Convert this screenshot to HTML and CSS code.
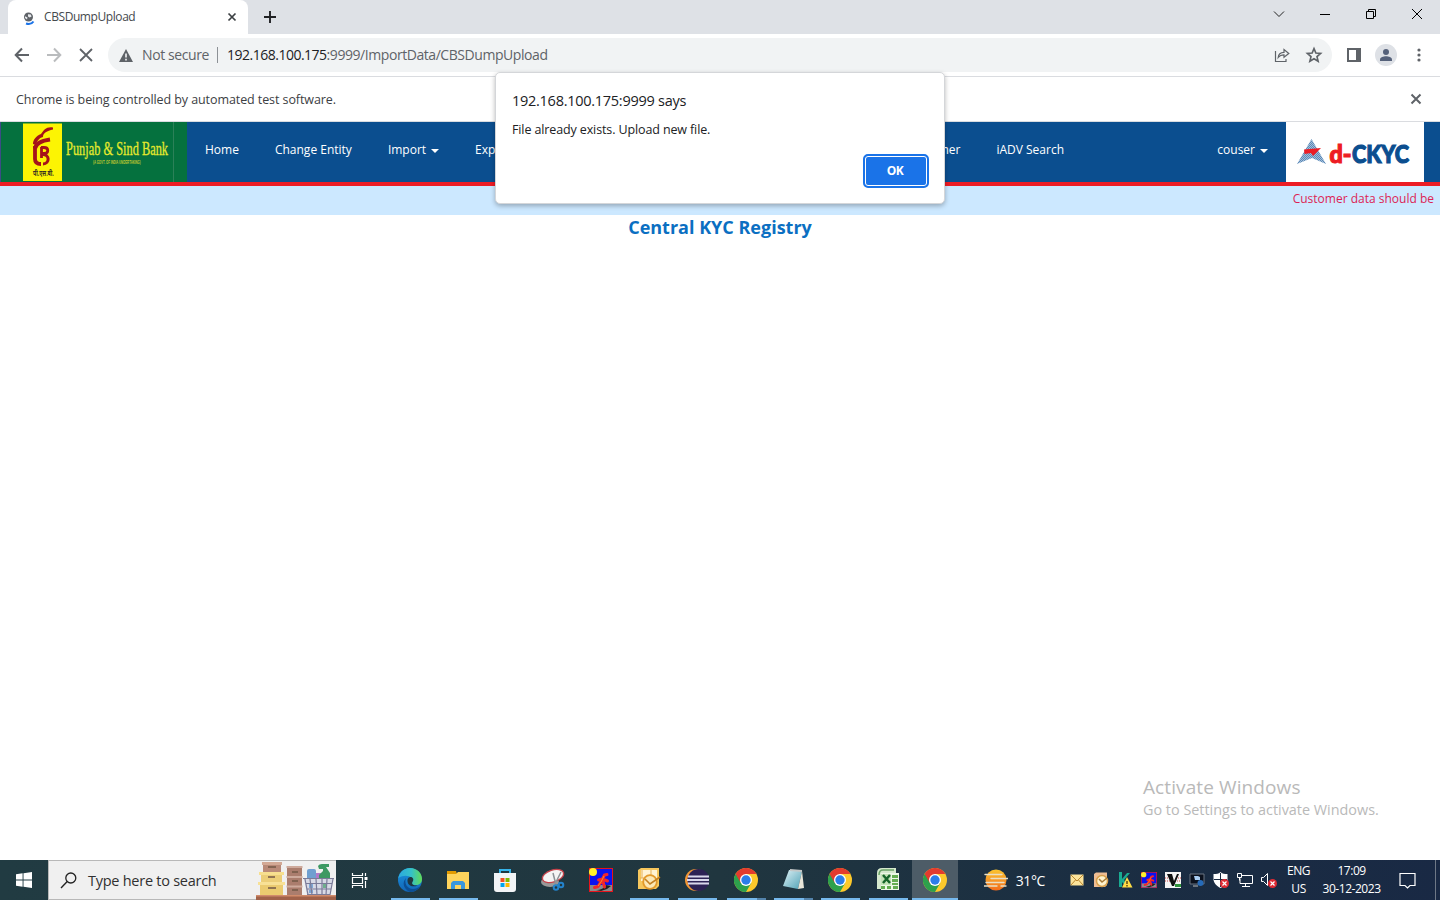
FILE: index.html
```html
<!DOCTYPE html>
<html lang="en">
<head>
<meta charset="utf-8">
<title>CBSDumpUpload</title>
<link rel="stylesheet" href="styles.css">
</head>
<body>
<svg class="defs" width="0" height="0" aria-hidden="true">
  <defs>
    <linearGradient id="edgeA" x1="0" y1="0" x2="1" y2="0"><stop offset="0" stop-color="#2ba9df"/><stop offset=".55" stop-color="#35c1c8"/><stop offset="1" stop-color="#62dc56"/></linearGradient>
    <linearGradient id="edgeB" x1="0" y1="0" x2="0" y2="1"><stop offset="0" stop-color="#1b95df"/><stop offset="1" stop-color="#1266b8"/></linearGradient>
    <linearGradient id="sun" x1="0" y1="0" x2="0" y2="1"><stop offset="0" stop-color="#fbc530"/><stop offset="1" stop-color="#f26c1c"/></linearGradient>
    <linearGradient id="note" x1="0" y1="0" x2="1" y2="1"><stop offset="0" stop-color="#dff2f6"/><stop offset="1" stop-color="#4fa1b5"/></linearGradient>
    <symbol id="chrome" viewBox="0 0 24 24">
      <circle cx="12" cy="12" r="12" fill="#fdc92b"/>
      <path d="M12 12 1.600 6A12 12 0 0 0 12 24L17.200 15z" fill="#2da14c"/>
      <path d="M1.600 6A12 12 0 0 1 22.400 6H12L6.800 15z" fill="#e33b2e"/>
      <circle cx="12" cy="12" r="6" fill="#fff"/><circle cx="12" cy="12" r="4.700" fill="#2b7de9"/>
    </symbol>
    <symbol id="runner" viewBox="0 0 24 24">
      <path d="M0 0h24v24H0z" fill="#e8141c"/><path d="M1 1h22v22H1z" fill="#0a12f0"/><path d="M1 17h22v6H1z" fill="#8b8b8b"/>
      <circle cx="4" cy="4" r="4" fill="#fff12a"/><path d="M7 22c5 0 8-2 10-5l5 1-4 3-6 2z" fill="#222"/>
      <path d="M18 6.500 15.500 7 12.500 13 9 18.500 5.500 19.500M9.500 12l4-1 5 2M13.500 12l2 7" fill="none" stroke="#f3272a" stroke-width="3" stroke-linejoin="round" stroke-linecap="round"/>
      <path d="M15 8l-3 6-3 4" stroke="#ff8a20" fill="none"/>
    </symbol>
    <pattern id="dots" width="2" height="2" patternUnits="userSpaceOnUse"><path d="M0 0h2v2H0z" fill="#a5bfd9"/><path d="M0 0h1v1H0zM1 1h1v1H1z" fill="#5a89b8"/></pattern>
  </defs>
</svg>

<div class="screen">
  <header class="tabstrip">
    <div class="tab">
      <svg class="favicon" viewBox="0 0 14 14"><circle cx="5.500" cy="5" r="4.500" fill="#5f6368"/><path d="M2 4.200 4.500 5.500 4 7.500 2 6zM5 2.200l2.800.3.8 2-2 1-1.600-1z" fill="#e8eaed"/><path d="M3 11.500c3.500 1.200 6 .2 7.500-2" fill="none" stroke="#1a73e8" stroke-width="2"/></svg>
      <span class="tab-title">CBSDumpUpload</span>
      <svg class="tab-close" viewBox="0 0 10 10"><path d="M1.500 1.500l7 7m0-7-7 7" stroke="#3c4043" stroke-width="1.700"/></svg>
    </div>
    <svg class="new-tab" viewBox="0 0 12 12"><path d="M6 0v12M0 6h12" stroke="#202124" stroke-width="1.900"/></svg>
    <div class="win-controls">
      <svg viewBox="0 0 12 12"><path d="M1 3.500l5 5 5-5" fill="none" stroke="#222"/></svg>
      <svg viewBox="0 0 12 12"><path d="M1 6.500h10" stroke="#000"/></svg>
      <svg viewBox="0 0 12 12"><path d="M1.500 3.500h7v7h-7zM3.500 3.500v-2h7v7h-2" fill="none" stroke="#000"/></svg>
      <svg viewBox="0 0 12 12"><path d="M1 1l10 10M11 1 1 11" stroke="#000"/></svg>
    </div>
  </header>

  <div class="toolbar">
    <div class="nav-buttons">
      <svg viewBox="0 0 16 16"><path d="M15 8H2M8 1.500 1.700 8 8 14.500" fill="none" stroke="#5f6368" stroke-width="2"/></svg>
      <svg viewBox="0 0 16 16"><path d="M1 8h13M8 1.500 14.300 8 8 14.500" fill="none" stroke="#babcbe" stroke-width="2"/></svg>
      <svg viewBox="0 0 16 16"><path d="M2 2l12 12M14 2 2 14" stroke="#5f6368" stroke-width="1.800"/></svg>
    </div>
    <div class="omnibox">
      <svg class="warn" viewBox="0 0 14 13"><path d="M7 0 14 13H0z" fill="#5f6368"/><path d="M7 4.500v4M7 9.800v1.600" stroke="#fff" stroke-width="1.500"/></svg>
      <span class="not-secure">Not secure</span>
      <span class="divider"></span>
      <span class="url"><b>192.168.100.175</b>:9999/ImportData/CBSDumpUpload</span>
      <svg class="share" viewBox="0 0 16 14"><path d="M1.500 3v10.500H12V11" fill="none" stroke="#5f6368" stroke-width="1.200"/><path d="M4.200 9.500C4.500 6 7 4.500 10 4.400V1.600L14.800 5.500 10 9.300V6.800C7.500 6.800 5.700 7.600 4.200 9.500z" fill="none" stroke="#5f6368" stroke-width="1.200"/></svg>
      <svg class="star" viewBox="0 0 24 24"><path d="M12 3.500l2.500 5.900 6.300.5-4.800 4.200 1.500 6.200L12 17l-5.500 3.300L8 14.100 3.200 9.900l6.300-.5z" fill="none" stroke="#5f6368" stroke-width="2.200"/></svg>
    </div>
    <svg class="panel-icon" viewBox="0 0 14 14"><path d="M0 0h14v14H0z" fill="#5f6368"/><path d="M2 2h7v10H2z" fill="#fff"/></svg>
    <svg class="avatar" viewBox="0 0 22 22"><circle cx="11" cy="11" r="11" fill="#dee1e6"/><circle cx="11" cy="8" r="3" fill="#55617a"/><path d="M5 17v-1.500c0-2 3.500-3.200 6-3.200s6 1.200 6 3.200V17z" fill="#55617a"/></svg>
    <svg class="menu-dots" viewBox="0 0 4 14"><g fill="#5f6368"><circle cx="2" cy="2" r="1.600"/><circle cx="2" cy="7" r="1.600"/><circle cx="2" cy="12" r="1.600"/></g></svg>
  </div>

  <div class="infobar">
    <span class="info-text">Chrome is being controlled by automated test software.</span>
    <svg class="info-close" viewBox="0 0 12 12"><path d="M1.500 1.500l9 9m0-9-9 9" stroke="#5f6368" stroke-width="2"/></svg>
  </div>

  <nav class="navbar">
    <svg class="bank-logo" viewBox="0 0 187 60">
      <path d="M0 0h187v60H0z" fill="#05713e"/><path d="M173.500 0v60" stroke="#2b8158"/><path d="M.5 0v60" stroke="#3c4c86"/>
      <path d="M23 1.500h39V59H23z" fill="#fcf403"/>
      <g fill="none" stroke="#a5131a">
        <path d="M53 5.500C46 4.500 44 8 41 12c-5 2-8 6-8 10l3 1c1-4 3-7 7-8 0-4 4-6 10-7.500z" fill="#a5131a" stroke="none"/>
        <path d="M50 17.500c-7 1-14 3-15 9" stroke-width="4"/>
        <path d="M35 24v13c0 3 2 5 6 5" stroke-width="3.800"/>
        <path d="M41.500 25v11M41 25.500h3c5 0 5 6 0 6h-2" stroke-width="2.800"/>
        <path d="M42 32.500c8-1 8 9.500 1 9.500" stroke-width="3"/>
      </g>
      <g transform="translate(33 53.500) scale(.8 1)"><text class="hindi" textLength="26" lengthAdjust="spacingAndGlyphs">पी.एस.बी.</text></g>
      <g transform="translate(66 33) scale(.68 1)"><text class="bank-name" textLength="150" lengthAdjust="spacingAndGlyphs">Punjab &amp; Sind Bank</text></g>
      <g transform="translate(93 41.500) scale(.62 1)"><text class="bank-sub" textLength="77" lengthAdjust="spacingAndGlyphs">(A GOVT. OF INDIA UNDERTAKING)</text></g>
    </svg>
    <div class="links">
      <a>Home</a><a>Change Entity</a><a class="drop">Import</a><a class="drop">Export</a>
      <a class="last-menu">Customer</a><a>iADV Search</a>
    </div>
    <a class="drop user">couser</a>
    <svg class="ckyc" viewBox="0 0 138 60">
      <path d="M0 0h138v60H0z" fill="#fff"/>
      <path d="M25.500 17 40 42 26 36 11 42z" fill="url(#dots)"/>
      <path d="M18 27.500 35 26 27 34l-2-3-6.500 1z" fill="#ed1c24"/>
      <text class="ckyc-text" y="41"><tspan class="ckyc-d" x="43.500" textLength="22" lengthAdjust="spacingAndGlyphs">d-</tspan><tspan x="66" textLength="57" lengthAdjust="spacingAndGlyphs">CKYC</tspan></text>
    </svg>
  </nav>
  <div class="marquee"><span>Customer data should be</span></div>

  <main class="page">
    <h1>Central KYC Registry</h1>
    <div class="activate"><p class="act-title">Activate Windows</p><p class="act-sub">Go to Settings to activate Windows.</p></div>
  </main>

  <footer class="taskbar">
    <div class="start"><svg viewBox="0 0 16 16"><path d="M0 2.200 6.600 1.300V7.500H0zM7.500 1.200 16 0v7.500H7.500zM0 8.500h6.600v6.200L0 13.800zM7.500 8.500H16V16l-8.500-1.200z" fill="#fff"/></svg></div>
    <div class="search">
      <svg class="lens" viewBox="0 0 17 17"><circle cx="10.800" cy="6" r="5" fill="none" stroke="#222" stroke-width="1.300"/><path d="M7.200 9.600 1 16" stroke="#222" stroke-width="1.400"/></svg>
      <span>Type here to search</span>
      <svg class="boxes" viewBox="0 0 80 39">
        <path d="M0 34h80v5H0z" fill="#a1624a"/><path d="M0 34h80v1.500H0z" fill="#d18b6b"/>
        <path d="M7 2h18v10H7z" fill="#b98a78"/><path d="M6 1h20v3H6z" fill="#d3a995"/>
        <path d="M5 13h21v8H5z" fill="#ecce78"/><path d="M3 11h25v3H3z" fill="#f7df8f"/>
        <path d="M4 23h23v11H4z" fill="#ebcb70"/><path d="M2 21h27v3H2z" fill="#f8e196"/>
        <path d="M31 6h15v28H31z" fill="#ab7d6d"/><path d="M30.500 5h16v2h-16zM30.500 15h16v2h-16zM30.500 24.500h16v2h-16z" fill="#ceaa9c"/>
        <path d="M12 6h8M12 16h7M12 27h8M36 11h6M36 20h6M36 29h6" stroke="#735845" stroke-width="1.600"/>
        <rect x="51" y="8" width="9" height="13" rx="2" fill="#6f9fd0"/><path d="M60 12h5v8h-5z" fill="#b17ac8"/>
        <path d="M62 5q1-2 4-2h7v3h-3l4 6v8H63v-6l4-4V8h-4z" fill="#3d9962"/>
        <path d="M48 18h29l-3 16H51z" fill="#d8dae6"/><path d="M53 23h4v4h-4zM53 29h4v3h-4z" fill="#7fa8d6"/><path d="M67 23h3v4h-3z" fill="#6fae8d"/>
        <path d="M47 17.500h31M50 22.500h26M51 28h24M51 33.500h23M49 18l3 16M54 18l2 16M60 18l1 16M66 18v16M71 18l-1 16M77 18l-3 16" fill="none" stroke="#7b7b98" stroke-width="1.200"/>
      </svg>
    </div>
    <div class="taskview"><svg viewBox="0 0 17 17"><path d="M1.500 1v2.500h10V1M1.500 16v-2.500h10V16M1.500 5.500h10v6h-10z" fill="none" stroke="#fff" stroke-width="1.200"/><path d="M14.500 1v3M14.500 9v7" stroke="#fff" stroke-width="1.200"/><path d="M13.500 5h3v3h-3z" fill="#fff"/></svg></div>
    <div class="apps">
      <div class="app open"><svg viewBox="0 0 24 24"><circle cx="12" cy="12" r="12" fill="url(#edgeB)"/><path d="M.2 10C2 3.500 6.500 0 12 0c7 0 12 5 12 11 0 4-3 6-6 6-4 0-5-1.500-3.500-3.500C16 9 8 5 .2 10z" fill="url(#edgeA)"/><path d="M8 10c-2 5 1 11 7 11 3 0 5-1 7.500-3C20 22 16 24 12 24 5 21 4 14 8 10z" fill="#0c4f95"/><path d="M12.500 9c2 0 3.500 2 2.500 4-2 2.500-.5 5 4.500 4.400C14 20 9 17 9.500 12c.2-2 1.500-3 3-3z" fill="#203740"/></svg></div>
      <div class="app open"><svg viewBox="0 0 24 24"><path d="M1 3h9l1 3H1z" fill="#e39b00"/><path d="M1 6h9l2-2h11v17H1z" fill="#ffd45c"/><path d="M5 21v-6l2-2h10l2 2v6h-4v-4H9v4z" fill="#3a97dc"/></svg></div>
      <div class="app"><svg viewBox="0 0 24 24"><path d="M7 6V2h10v4" fill="none" stroke="#35b4ea" stroke-width="2"/><path d="M1 5h22v16q0 3-3 3H4q-3 0-3-3z" fill="#f2f4f6"/><path d="M7.500 10h4v4h-4z" fill="#f25022"/><path d="M12.500 10h4v4h-4z" fill="#7fba00"/><path d="M7.500 15h4v4h-4z" fill="#00a4ef"/><path d="M12.500 15h4v4h-4z" fill="#ffb900"/></svg></div>
      <div class="app"><svg viewBox="0 0 24 24"><ellipse cx="9" cy="14" rx="9" ry="5" fill="#999"/><ellipse cx="12" cy="8" rx="11" ry="6" transform="rotate(-18 12 8)" fill="#f5f5f5" stroke="#c5424a" stroke-width="1.300"/><path d="M12 5l3 12M20 4l-6 12" stroke="#8d9297" stroke-width="1.500"/><g fill="none" stroke="#2383cc" stroke-width="2"><circle cx="15" cy="19.500" r="2.300"/><circle cx="20" cy="17" r="2.300"/></g></svg></div>
      <div class="app"><svg><use href="#runner"/></svg></div>
      <div class="app open"><svg viewBox="0 0 24 24"><path d="M1 2 4 0h18v18l-3 3H1z" fill="#f6c75d"/><path d="M4 2h16v11H4z" fill="#fff3d4"/><path d="M3 10h5M5 2v8M14 2v6" stroke="#e7b157"/><circle cx="13" cy="14" r="6.800" fill="#fce8b5" stroke="#e39a2b" stroke-width="1.800"/><path d="M8 11l5 5 10-7" fill="none" stroke="#c48023" stroke-width="1.600"/></svg></div>
      <div class="app open"><svg viewBox="0 0 24 24"><circle cx="11" cy="12" r="11" fill="#f29735"/><circle cx="13.500" cy="12" r="11" fill="#2c2255"/><path d="M3 8.500h21M2 12h22M3 15.500h21" stroke="#d9d8ec" stroke-width="1.800"/></svg></div>
      <div class="app open stack"><svg><use href="#chrome"/></svg></div>
      <div class="app open stack"><svg viewBox="0 0 24 24"><path d="M7 2 20 3 16 21 1 18z" fill="url(#note)"/><path d="M20 3l2 17-6 1z" fill="#e9e6d9"/><path d="M8 2l12 1" stroke="#c4c8c8" stroke-width="2"/></svg></div>
      <div class="app open"><svg><use href="#chrome"/></svg></div>
      <div class="app open"><svg viewBox="0 0 24 24"><path d="M1 5q0-5 5-5h14v5L8 21H1z" fill="#d5e8cd"/><path d="M3 7q0-5 4-5h11" fill="none" stroke="#6aa366" stroke-width="1.500"/><path d="M5 5h18v17H5z" fill="#edf7e7"/><path d="M16 7h6v3h-6zM16 11h6v3h-6zM16 15h6v2h-6zM5 18h4v3H5zM11 18h4v3h-4zM17 18h5v3h-5z" fill="#65ad52"/><path d="M5 6h10v11H5z" fill="#c5e3b8"/><path d="M7 7l7 8M14 7l-7 8" stroke="#17652a" stroke-width="2.500"/></svg></div>
      <div class="app open active"><svg><use href="#chrome"/></svg></div>
    </div>
    <div class="weather"><svg viewBox="0 0 24 22"><circle cx="12" cy="11" r="10.500" fill="url(#sun)"/><path d="M1 5.500h17M7 9.500h17M2 13.500h18M0 17h13M17 17h5" stroke="#e9dfc6" stroke-width="1.400" stroke-linecap="round"/></svg><span>31°C</span></div>
    <div class="tray">
      <svg viewBox="0 0 16 16"><path d="M1.500 2.500h13v11h-13z" fill="#fbe39b"/><path d="M2 3l6 6 6-6M2 13l4.500-5M14 13 9.500 8" fill="none" stroke="#bb862d"/></svg>
      <svg viewBox="0 0 16 16"><path d="M1 2l2-1.500h11V13l-2 2H1z" fill="#eebd93"/><circle cx="9" cy="9" r="5.500" fill="#fff3cd" stroke="#d8a04b" stroke-width="1.500"/><path d="M6 7l3 3 5-4" fill="none" stroke="#a97a35" stroke-width="1.500"/></svg>
      <svg viewBox="0 0 16 16"><path d="M2 0h3v7l5-6h3L7 8l6 7H9L5 10v5H2z" fill="#19aa91"/><path d="M10 5l5.500 10.500H5z" fill="#ffdd45"/><path d="M10 9v3M10 13v1.500" stroke="#42310d" stroke-width="1.300"/></svg>
      <svg viewBox="0 0 16 16"><use href="#runner" width="16" height="16"/></svg>
      <svg viewBox="0 0 16 16"><path d="M0 0h16v16H0z" fill="#f4f4f4"/><path d="M0 6h4M0 9h5M11 6h5M10 9h5" stroke="#c74343" stroke-dasharray="1 1"/><path d="M2 2h5l2 7 3-7h2L9 14H7z" fill="#111"/><path d="M10 12h6v3h-6z" fill="#30943c"/></svg>
      <svg viewBox="0 0 16 16"><path d="M1 2h14v10H1z" fill="#0b111d" stroke="#6b7482"/><path d="M5 4h4l2 1v3H6z" fill="#a9cdf2"/><circle cx="11.500" cy="11" r="3" fill="#266bb9"/><path d="M4 14h5" stroke="#bbb"/></svg>
      <svg viewBox="0 0 16 16"><path d="M7.500 0c2 2 4 2 7 2v5c0 4-3 7-7 9-4-2-7-5-7-9V2c3 0 5 0 7-2z" fill="#fff"/><path d="M7.500 1v14M1 7.500h13" stroke="#1a2a40"/><circle cx="11.500" cy="11.500" r="4.500" fill="#df2b34"/><path d="M9.500 9.500l4 4m0-4-4 4" stroke="#fff" stroke-width="1.200"/></svg>
      <svg viewBox="0 0 16 16"><path d="M5 3.500h10.500v8H3v-5M8.500 12v2.500M5 14.500h8M.5 1.500h4v4h-4zM2.500 5.500v3" fill="none" stroke="#fff"/></svg>
      <svg viewBox="0 0 16 16"><path d="M.5 5.500h2l4-4v12l-4-4h-2z" fill="none" stroke="#fff"/><circle cx="11.500" cy="11.500" r="4.500" fill="#df2b34"/><path d="M9.500 9.500l4 4m0-4-4 4" stroke="#fff" stroke-width="1.200"/></svg>
    </div>
    <div class="lang"><span>ENG</span><span>US</span></div>
    <div class="clock"><span class="time">17:09</span><span class="date">30-12-2023</span></div>
    <svg class="notify" viewBox="0 0 17 17"><path d="M1 1.500h15v12h-5l-2.500 2.500L6 13.500H1z" fill="none" stroke="#fff" stroke-width="1.200"/></svg>
    <span class="peek"></span>
  </footer>

  <section class="dialog" role="alertdialog">
    <h2>192.168.100.175:9999 says</h2>
    <p>File already exists. Upload new file.</p>
    <button>OK</button>
  </section>
</div>
</body>
</html>
```
FILE: styles.css
```css
* { box-sizing: border-box; }
body { margin: 0; font-family: "Open Sans", "Noto Sans", sans-serif; background: #fff; overflow: hidden; }
svg { display: block; flex: none; }
.defs { position: absolute; }
.screen { width: 1440px; height: 900px; display: flex; flex-direction: column; position: relative; white-space: nowrap; }
.tabstrip { height: 34px; background: #dee1e6; display: flex; align-items: flex-start; padding-left: 8px; flex: none; }
.tab { width: 240px; height: 34px; background: #fff; border-radius: 8px 8px 0 0; display: flex; align-items: center; padding: 0 11px 0 15px; }
.favicon { width: 14px; height: 14px; margin-top: 4px; }
.tab-title { font-size: 12px; color: #45494d; margin-left: 7px; letter-spacing: -.42px; flex: 1; padding-bottom: 1px; }
.tab-close { width: 10px; height: 10px; }
.new-tab { width: 12px; height: 12px; margin: 11px 0 0 16px; }
.win-controls { margin: 8px 17px 0 auto; display: flex; gap: 34px; }
.win-controls svg { width: 12px; height: 12px; }
.toolbar { height: 43px; flex: none; border-bottom: 1px solid #dadce0; display: flex; align-items: center; padding: 0 19.500px 0 14px; }
.nav-buttons { display: flex; gap: 16px; margin-right: 14px; }
.nav-buttons svg { width: 16px; height: 16px; }
.omnibox { width: 1224px; height: 34px; border-radius: 17px; background: #f1f3f4; display: flex; align-items: center; padding: 0 9px 0 11px; color: #5f6368; font-size: 14px; }
.warn { width: 14px; height: 13px; }
.not-secure { width: 67px; margin-left: 9px; letter-spacing: -.4px; padding-bottom: 1px; }
.divider { width: 1px; height: 16px; background: #8d9196; margin: 0 9px 0 8px; }
.url { flex: 1; letter-spacing: -.44px; padding-bottom: 1px; }
.url b { font-weight: 400; color: #202124; letter-spacing: -.5px; }
.share { width: 16px; height: 14px; margin-right: 15px; }
.star { width: 18px; height: 18px; }
.panel-icon { width: 14px; height: 14px; margin-left: 15px; }
.avatar { width: 22px; height: 22px; margin: 0 auto 0 14px; }
.menu-dots { width: 4px; height: 14px; }
.infobar { height: 45px; flex: none; display: flex; align-items: center; justify-content: space-between; padding: 0 18px 0 16px; border-bottom: 1px solid #dadce0; }
.info-text { font-size: 12.5px; color: #3c4043; letter-spacing: -.08px; }
.info-close { width: 12px; height: 12px; }
.navbar { height: 64px; flex: none; background: #0b4e8f; border-bottom: 4px solid #ed1c24; display: flex; color: #fff; font-size: 12px; }
.navbar a { line-height: 56px; }
.bank-logo { width: 187px; height: 60px; }
.bank-name { font: 19px "Liberation Serif", serif; fill: #e6ea2c; stroke: #e6ea2c; stroke-width: .3px; }
.bank-sub { font: bold 4.5px "Liberation Sans", sans-serif; fill: #c1c82f; }
.hindi { font: bold 8px "Noto Sans", sans-serif; fill: #3c3420; }
.links { display: flex; padding-left: 18px; gap: 36px; width: 877px; }
.last-menu { margin-left: auto; }
.drop { display: flex; align-items: center; gap: 5px; }
.drop::after { content: ""; border: 4px solid transparent; border-top-color: #fff; border-bottom: 0; margin-top: 2px; }
.user { margin-left: auto; margin-right: 18px; height: 56px; }
.links .drop { height: 56px; }
.ckyc { width: 138px; height: 60px; margin-right: 16px; }
.ckyc-text { font: 900 25px Lato, sans-serif; fill: #0b4e8f; stroke: #0b4e8f; stroke-width: 1.2px; }
.ckyc-d { fill: #ed1c24; stroke: #ed1c24; }
.marquee { height: 29px; flex: none; background: #cce8ff; display: flex; justify-content: flex-end; padding: 4px 6px 0 0; color: #dc1f55; font-size: 12px; line-height: 17px; }
.page { flex: 1; display: flex; flex-direction: column; justify-content: space-between; }
h1 { margin: 0; text-align: center; color: #0b6fc2; font-size: 18px; line-height: 25px; font-weight: 700; }
.activate { width: 297px; align-self: flex-end; color: #b9b9b9; height: 85px; }
.activate p { margin: 0; }
.act-title { font-size: 19px; line-height: 24px; letter-spacing: .1px; }
.act-sub { font-size: 14.4px; line-height: 22px; }
.taskbar { height: 40px; flex: none; display: flex; background: linear-gradient(90deg, #213b42, #20363f 50%, #1b2e42 75%, #192944); color: #fff; }
.taskbar > * { flex: none; }
.start { width: 48px; display: grid; place-items: center; }
.start svg { width: 16px; height: 16px; }
.search { width: 288px; background: #f0f0f0; border: 1px solid #b8b8b8; border-right: 0; display: flex; align-items: center; padding-left: 11px; color: #303030; font-size: 14.5px; }
.search span { margin-left: 11px; letter-spacing: -.26px; }
.lens { width: 17px; height: 17px; }
.boxes { width: 80px; height: 39px; margin-left: auto; }
.taskview { width: 50px; display: flex; align-items: center; padding-left: 15px; }
.taskview svg { width: 17px; height: 17px; }
.apps { display: flex; }
.app { width: 47.8px; height: 40px; display: grid; place-items: center; }
.app svg { width: 24px; height: 24px; }
.open { background: linear-gradient(#76b9ed, #76b9ed) 5px 100% / 39px 2px no-repeat; }
.stack { padding-left: 3px; background: linear-gradient(90deg, #76b9ed 30px, #5484ac 30px) 6px 100% / 39px 2px no-repeat; }
.active { width: 46px; background: linear-gradient(#76b9ed, #76b9ed) 0 100% / 46px 2px no-repeat #4d5c67; }
.weather { display: flex; align-items: center; margin-left: 26px; width: 84.8px; font-size: 14px; }
.weather svg { width: 24px; height: 22px; }
.weather span { margin-left: 8px; letter-spacing: -.4px; }
.tray { display: flex; align-items: center; gap: 8px; }
.tray svg { width: 16px; height: 16px; }
.lang, .clock { display: flex; flex-direction: column; align-items: center; font-size: 12px; line-height: 18px; padding-top: 2px; letter-spacing: -.46px; }
.lang { width: 30px; margin-left: 7px; }
.clock { width: 62px; margin-left: 7px; }
.notify { width: 17px; height: 17px; margin: 12px 19.5px 0 16px; }
.peek { width: 1px; background: #6e7886; }
.dialog { position: absolute; left: 495px; top: 72px; width: 450px; height: 132px; background: #fff; border: 1px solid #d4d6d9; border-radius: 5px; box-shadow: 0 2px 5px rgba(0,0,0,.28); padding: 18px 15px 15px 16px; display: flex; flex-direction: column; color: #202124; }
.dialog h2 { margin: 0; font-size: 14.5px; line-height: 20px; font-weight: 400; letter-spacing: -.27px; }
.dialog p { margin: 9px 0 0; font-size: 12.5px; line-height: 19px; letter-spacing: -.12px; }
.dialog button { margin-top: auto; align-self: flex-end; width: 66px; height: 34px; border: 2px solid #1a73e8; border-radius: 5px; background: #1a73e8; box-shadow: inset 0 0 0 1px #fff; color: #fff; font: bold 12px "Open Sans", sans-serif; letter-spacing: -.4px; padding: 0 2px 1px 0; }
```
